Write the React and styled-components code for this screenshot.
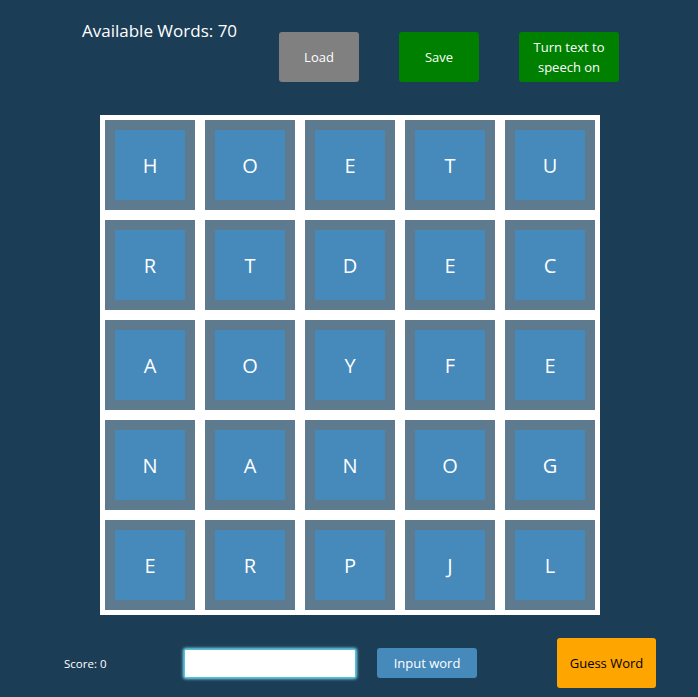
import React, { useState } from "react";
import styled, { createGlobalStyle } from "styled-components";

const GlobalStyle = createGlobalStyle`
  html, body {
    margin: 0;
    padding: 0;
    background-color: #1c3d56;
  }
  body {
    font-family: "Open Sans", "Noto Sans", sans-serif;
    color: white;
  }
`;

const letters = [
  ["H", "O", "E", "T", "U"],
  ["R", "T", "D", "E", "C"],
  ["A", "O", "Y", "F", "E"],
  ["N", "A", "N", "O", "G"],
  ["E", "R", "P", "J", "L"]
];

function App() {
  const [word, setWord] = useState("");

  return (
    <>
      <GlobalStyle />
      <Page>
        <TopBar>
          <WordCount>Available Words: 70</WordCount>
          <ActionButton bg="#808080" width="80px">Load</ActionButton>
          <ActionButton bg="#008000" width="80px">Save</ActionButton>
          <ActionButton bg="#008000" width="100px">
            Turn text to speech on
          </ActionButton>
        </TopBar>
        <Board>
          {letters.flat().map((l, i) => (
            <Tile key={i}>
              <Letter>{l}</Letter>
            </Tile>
          ))}
        </Board>
        <BottomBar>
          <Score>Score: 0</Score>
          <WordInput
            autoFocus
            value={word}
            onChange={(e) => setWord(e.target.value)}
          />
          <SmallButton>Input word</SmallButton>
          <GuessButton>Guess Word</GuessButton>
        </BottomBar>
      </Page>
    </>
  );
}

export default App;

const Page = styled.div`
  width: 698px;
  height: 697px;
  display: flex;
  flex-direction: column;
  overflow: hidden;
`;

const TopBar = styled.div`
  display: flex;
  align-items: flex-start;
  padding-top: 32px;
  padding-left: 82px;
  height: 50px;
`;

const WordCount = styled.div`
  font-size: 17px;
  margin-top: -13px;
  width: 197px;
  white-space: nowrap;
`;

const ActionButton = styled.button`
  width: ${(p) => p.width};
  height: 50px;
  margin-right: 40px;
  background-color: ${(p) => p.bg};
  color: white;
  border: none;
  border-radius: 3px;
  font-family: inherit;
  font-size: 13px;
  line-height: 20px;
  padding: 0 4px;
`;

const Board = styled.div`
  margin-top: 33px;
  margin-left: 100px;
  width: 490px;
  padding: 5px;
  background-color: white;
  display: grid;
  grid-template-columns: repeat(5, 90px);
  grid-auto-rows: 90px;
  gap: 10px;
`;

const Tile = styled.div`
  background-color: #5d7a8f;
  padding: 10px;
  display: flex;
`;

const Letter = styled.div`
  flex: 1;
  background-color: #4689bb;
  display: flex;
  align-items: center;
  justify-content: center;
  font-size: 20px;
  font-weight: 400;
  color: #ffffff;
`;

const BottomBar = styled.div`
  display: flex;
  align-items: center;
  margin-top: 23px;
  height: 50px;
  padding-left: 64px;
`;

const Score = styled.div`
  font-size: 11.5px;
  width: 120px;
`;

const WordInput = styled.input`
  box-sizing: border-box;
  width: 172px;
  height: 29px;
  padding: 1px 6px;
  border: 1px solid #4fc3e0;
  border-radius: 2px;
  outline: none;
  box-shadow: 0 0 3px 1px #7fe0f5;
  font-family: inherit;
  font-size: 14px;
  caret-color: #333;
  margin-right: 21px;
`;

const SmallButton = styled.button`
  width: 100px;
  height: 30px;
  background-color: #4689bb;
  color: white;
  border: none;
  border-radius: 3px;
  font-family: inherit;
  font-size: 13px;
  margin-right: 80px;
`;

const GuessButton = styled.button`
  width: 99px;
  height: 50px;
  background-color: #ffa500;
  color: black;
  border: none;
  border-radius: 3px;
  font-family: inherit;
  font-size: 13px;
`;
